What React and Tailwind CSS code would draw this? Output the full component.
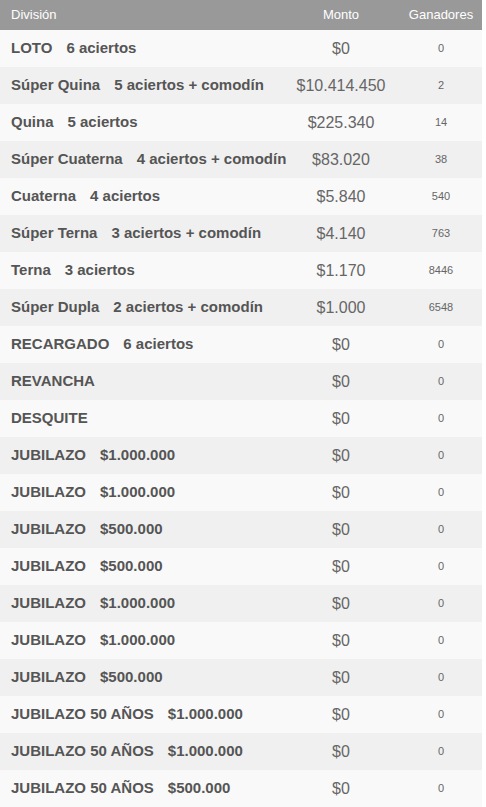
// Prize table (Quini 6 style)

import React from 'react';

const rows = [
  { name: 'LOTO', extra: '6 aciertos', monto: '$0', ganadores: '0' },
  { name: 'Súper Quina', extra: '5 aciertos + comodín', monto: '$10.414.450', ganadores: '2' },
  { name: 'Quina', extra: '5 aciertos', monto: '$225.340', ganadores: '14' },
  { name: 'Súper Cuaterna', extra: '4 aciertos + comodín', monto: '$83.020', ganadores: '38' },
  { name: 'Cuaterna', extra: '4 aciertos', monto: '$5.840', ganadores: '540' },
  { name: 'Súper Terna', extra: '3 aciertos + comodín', monto: '$4.140', ganadores: '763' },
  { name: 'Terna', extra: '3 aciertos', monto: '$1.170', ganadores: '8446' },
  { name: 'Súper Dupla', extra: '2 aciertos + comodín', monto: '$1.000', ganadores: '6548' },
  { name: 'RECARGADO', extra: '6 aciertos', monto: '$0', ganadores: '0' },
  { name: 'REVANCHA', extra: '', monto: '$0', ganadores: '0' },
  { name: 'DESQUITE', extra: '', monto: '$0', ganadores: '0' },
  { name: 'JUBILAZO', extra: '$1.000.000', monto: '$0', ganadores: '0' },
  { name: 'JUBILAZO', extra: '$1.000.000', monto: '$0', ganadores: '0' },
  { name: 'JUBILAZO', extra: '$500.000', monto: '$0', ganadores: '0' },
  { name: 'JUBILAZO', extra: '$500.000', monto: '$0', ganadores: '0' },
  { name: 'JUBILAZO', extra: '$1.000.000', monto: '$0', ganadores: '0' },
  { name: 'JUBILAZO', extra: '$1.000.000', monto: '$0', ganadores: '0' },
  { name: 'JUBILAZO', extra: '$500.000', monto: '$0', ganadores: '0' },
  { name: 'JUBILAZO 50 AÑOS', extra: '$1.000.000', monto: '$0', ganadores: '0' },
  { name: 'JUBILAZO 50 AÑOS', extra: '$1.000.000', monto: '$0', ganadores: '0' },
  { name: 'JUBILAZO 50 AÑOS', extra: '$500.000', monto: '$0', ganadores: '0' },
];

const App = () => {
  return (
    <div className="w-[486px] bg-white font-['Liberation_Sans',Arial,sans-serif]">
      <div className="w-[482px]">
        {/* header */}
        <div className="grid grid-cols-[minmax(0,1fr)_118px_82px] h-[30px] items-center bg-[#999999] text-white text-[13px]">
          <span className="pl-[11px]">División</span>
          <span className="text-center">Monto</span>
          <span className="text-center">Ganadores</span>
        </div>

        {rows.map((row, i) => (
          <div
            key={i}
            className={
              'grid grid-cols-[minmax(0,1fr)_118px_82px] h-[37px] items-center ' +
              (i % 2 === 0 ? 'bg-[#f9f9f9]' : 'bg-[#f0f0f0]')
            }
          >
            <div className="pl-[11px] flex gap-[14px] text-[15px] font-bold text-[#555555] whitespace-nowrap">
              <span>{row.name}</span>
              {row.extra && <span>{row.extra}</span>}
            </div>
            <span className="text-center text-[16px] text-[#666666]">{row.monto}</span>
            <span className="text-center text-[11px] text-[#666666]">{row.ganadores}</span>
          </div>
        ))}
      </div>
    </div>
  );
};

export default App;
